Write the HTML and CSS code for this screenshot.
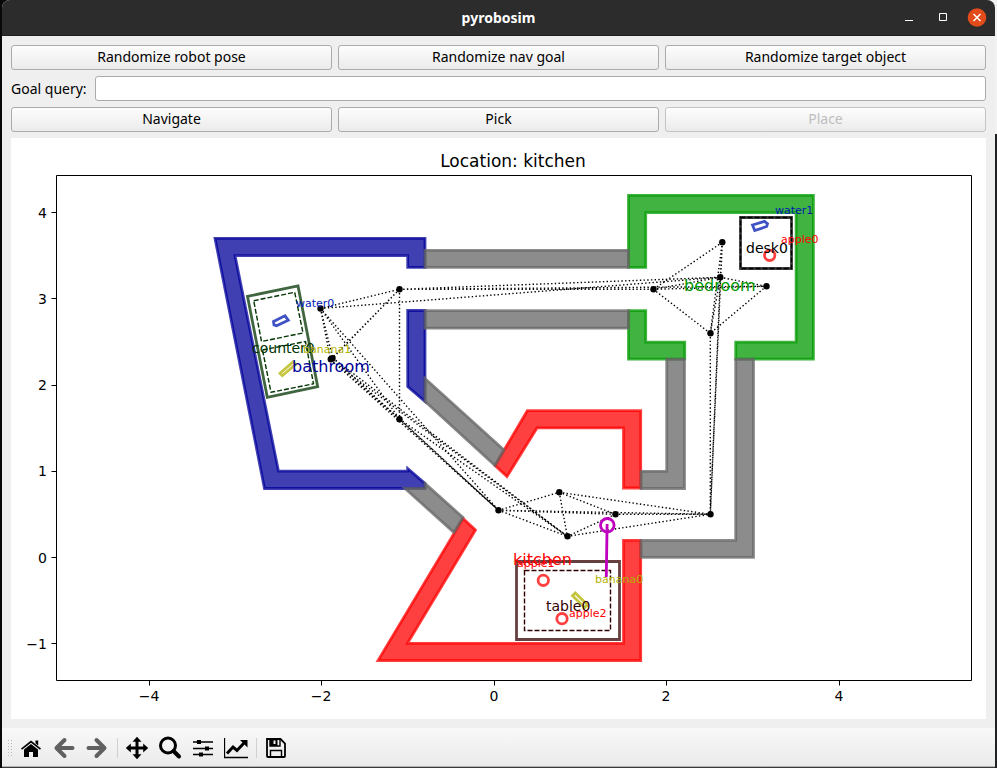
FILE: index.html
```html
<!DOCTYPE html>
<html lang="en">
<head>
<meta charset="utf-8">
<title>pyrobosim</title>
<link rel="stylesheet" href="styles.css">
</head>
<body>
<div class="window">
  <header class="titlebar">
    <h1>pyrobosim</h1>
    <div class="controls">
      <button type="button" aria-label="Minimize"><svg width="20" height="20" viewBox="0 0 20 20"><path d="M6 12.500h8" stroke="#fff" fill="none"/></svg></button>
      <button type="button" aria-label="Maximize"><svg width="20" height="20" viewBox="0 0 20 20"><path d="M6.500 5.500h7v7h-7z" stroke="#fff" fill="none"/></svg></button>
      <button type="button" class="close" aria-label="Close"><svg width="20" height="20" viewBox="0 0 20 20"><circle cx="10" cy="9.500" r="9.300" fill="#e24b1a"/><path d="M6.500 6l7 7M13.500 6l-7 7" stroke="#fff" stroke-width="1.500" fill="none"/></svg></button>
    </div>
  </header>

  <main class="content">
    <div class="row">
      <button type="button" class="btn">Randomize robot pose</button>
      <button type="button" class="btn">Randomize nav goal</button>
      <button type="button" class="btn">Randomize target object</button>
    </div>
    <div class="query">
      <label for="goal">Goal query:</label>
      <input id="goal" type="text">
    </div>
    <div class="row">
      <button type="button" class="btn">Navigate</button>
      <button type="button" class="btn">Pick</button>
      <button type="button" class="btn" disabled>Place</button>
    </div>

    <svg class="plot" viewBox="11 138 975 581" role="img" aria-label="World map">
      <text class="t-title" x="513" y="167" text-anchor="middle">Location: kitchen</text>

      <g class="room bathroom">
        <path d="M215 238.300H425V267.400H407.700V255.600H235L278.500 471.200H407.700V468.500L425 483.500V488.500H264.500Z"/>
        <path d="M407.700 310.500H425V401.500L407.700 386.500Z"/>
      </g>
      <g class="room kitchen">
        <path d="M527.300 410.700H640.700V488H623.500V427.900H537L507 476.500L495 465.500Z"/>
        <path d="M623.500 540.400H640.700V660.500H378L463 518.500L475.500 530L407.500 643.300H623.500Z"/>
      </g>
      <g class="room bedroom">
        <path d="M628.500 195.300H813.400V359.100H735.700V342.200H796.100V212.600H645.700V267.400H628.500Z"/>
        <path d="M628.500 310.700H645.700V342.200H684.700V359.100H628.500Z"/>
      </g>
      <g class="room hall">
        <path d="M425 250.300H628.500V267.400H425Z"/>
        <path d="M425 310.700H628.500V328.200H425Z"/>
        <path d="M425 378.500L504 450L495 465.500L425 401.500Z"/>
        <path d="M405 488.500H425V483.500L463 517.500L454 532.500Z"/>
        <path d="M641 471.300H666.700V359.100H684.500V488.500H641Z"/>
        <path d="M735.700 359.100H753.500V557.300H641V540.400H735.700Z"/>
      </g>

      <g class="edges">
        <path d="M320.500 308.500L399.500 289.300M320.500 308.500L330.500 359.500M320.500 308.500L332.800 358M320.500 308.500L498.500 510.300M320.500 308.500L399.500 419M320.500 308.500L720.300 277.300"/>
        <path d="M399.500 289.300L330.500 359.500M399.500 289.300L332.800 358M399.500 289.300V419M399.500 289.300H653.300M399.500 289.300L720.300 277.300M399.500 289.300L766.300 286.300"/>
        <path d="M330.500 359.500L399.500 419M332.800 358L399.500 419M330.500 359.500L498.500 510.300M332.800 358L498.500 510.300M330.500 359.500L567.300 536.300M332.800 358L567.300 536.300M399.500 419L498.500 510.300M399.500 419L567.300 536.300"/>
        <path d="M722.300 242.300L720.300 277.300M722.300 242.300L653.300 289.300M722.300 242.300L710.300 333.300M722.300 242.300L710.300 514.300M720.300 277.300L653.300 289.300M720.300 277.300L766.300 286.300M720.300 277.300L710.300 333.300M720.300 277.300L710.300 514.300"/>
        <path d="M653.300 289.300L766.300 286.300M653.300 289.300L710.300 333.300M766.300 286.300L710.300 333.300M710.300 333.300V514.300"/>
        <path d="M498.500 510.300L559.300 492.300M498.500 510.300L615.300 514.300M498.500 510.300L567.300 536.300M498.500 510.300L710.300 514.300M559.300 492.300L615.300 514.300M559.300 492.300L567.300 536.300M559.300 492.300L710.300 514.300M615.300 514.300L567.300 536.300M615.300 514.300H710.300M567.300 536.300L710.300 514.300"/>
      </g>
      <g class="nodes">
        <circle cx="320.500" cy="308.500" r="3.200"/><circle cx="399.500" cy="289.300" r="3.200"/>
        <circle cx="330.800" cy="359.300" r="3.200"/><circle cx="332.500" cy="358.300" r="3.200"/>
        <circle cx="399.500" cy="419.300" r="3.200"/><circle cx="722.300" cy="242.300" r="3.200"/>
        <circle cx="720.300" cy="277.300" r="3.200"/><circle cx="653.500" cy="289.300" r="3.200"/>
        <circle cx="766.500" cy="286.300" r="3.200"/><circle cx="710.500" cy="333.300" r="3.200"/>
        <circle cx="498.500" cy="510.300" r="3.200"/><circle cx="559.300" cy="492.300" r="3.200"/>
        <circle cx="615.500" cy="514.300" r="3.200"/><circle cx="567.500" cy="536.300" r="3.200"/>
        <circle cx="710.500" cy="514.300" r="3.200"/>
      </g>

      <g class="furniture counter">
        <path d="M247.500 296.300L298 286L317.700 386.700L267.300 397.300Z"/>
        <path class="surface" d="M253.700 300.700L294.700 292.300L303 333L261.500 341.500Z"/>
        <path class="surface" d="M262.500 350L305.500 341.500L313.500 383.800L271 392.300Z"/>
      </g>
      <g class="furniture table">
        <path d="M516.500 561.500H619.500V639.500H516.500Z"/>
        <path class="surface" d="M524.500 570.500H610.500V630.500H524.500Z"/>
      </g>
      <g class="furniture desk">
        <path d="M740.500 217.500H791.500V268.500H740.500Z"/>
        <path class="surface" d="M740.500 217.500H791.500V268.500H740.500Z"/>
      </g>
      <g class="object water">
        <path d="M273.500 321.500L285 315.800L288.300 320.300L276.500 325.700L274 325Z"/>
        <path d="M752.500 225L764.500 221.300L767.500 223.700L766.700 226.500L754.700 230.500Z"/>
      </g>
      <g class="object banana">
        <path d="M280 373.300L293.300 361.700L295.700 364.300L282.300 375.700Z"/>
        <path d="M575.300 593L587.500 604.700L584.700 607.500L572.500 595.700Z"/>
      </g>
      <g class="object apple">
        <circle cx="769.700" cy="255.300" r="5.200"/>
        <circle cx="543.300" cy="580.300" r="5.200"/>
        <circle cx="562" cy="618.700" r="5.200"/>
      </g>
      <g class="robot">
        <circle cx="607.300" cy="525.300" r="6.800"/>
        <path d="M607.100 524L606.300 577"/>
      </g>

      <g class="t-room">
        <text x="513" y="565" fill="#f00">kitchen</text>
        <text x="684" y="291" fill="#090">bedroom</text>
        <text x="292" y="372" fill="#009">bathroom</text>
      </g>
      <g class="t-medium">
        <text x="252" y="353" fill="#003300">counter0</text>
        <text x="546" y="611" fill="#330000">table0</text>
        <text x="746" y="253">desk0</text>
      </g>
      <g class="t-small">
        <text x="296" y="307" fill="#0019b2">water0</text>
        <text x="775" y="214" fill="#0019b2">water1</text>
        <text x="303" y="353" fill="#b2b200">banana1</text>
        <text x="595" y="583" fill="#b2b200">banana0</text>
        <text x="781" y="243" fill="#f00">apple0</text>
        <text x="517" y="567" fill="#f00">apple1</text>
        <text x="569" y="617" fill="#f00">apple2</text>
      </g>

      <g class="axes">
        <path d="M56.500 175.500H971.500V680.500H56.500Z"/>
        <path d="M149.500 680.500v5M321.500 680.500v5M494.500 680.500v5M666.500 680.500v5M839.500 680.500v5"/>
        <path d="M56.500 212.500h-5M56.500 298.500h-5M56.500 385.500h-5M56.500 471.500h-5M56.500 557.500h-5M56.500 643.500h-5"/>
      </g>
      <g class="t-medium" text-anchor="middle">
        <text x="149" y="701">−4</text><text x="321" y="701">−2</text><text x="494" y="701">0</text><text x="666" y="701">2</text><text x="839" y="701">4</text>
      </g>
      <g class="t-medium" text-anchor="end">
        <text x="47" y="218">4</text><text x="47" y="304">3</text><text x="47" y="390">2</text><text x="47" y="476">1</text><text x="47" y="563">0</text><text x="47" y="649">−1</text>
      </g>
    </svg>
  </main>

  <nav class="toolbar" aria-label="Plot tools">
    <span class="grip"></span>
    <button type="button" aria-label="Home"><svg viewBox="0 0 24 24"><path d="M2 12.500L12 4.500L22 12.500L21 13.800L12 6.700L3 13.800ZM16.500 4.500h2.700v5L16.500 7.300ZM12 8l7 5.500v7.500h-5v-5h-4v5h-5v-7.500Z"/></svg></button>
    <button type="button" class="muted" aria-label="Back"><svg viewBox="0 0 24 24"><path d="M12.500 4L4.500 12l8 8M5 12h15.500" fill="none" stroke-width="4"/></svg></button>
    <button type="button" class="muted" aria-label="Forward"><svg viewBox="0 0 24 24"><path d="M11.500 4l8 8l-8 8M19 12H3.500" fill="none" stroke-width="4"/></svg></button>
    <span class="sep"></span>
    <button type="button" aria-label="Pan"><svg viewBox="0 0 24 24"><path d="M12 .8l4.500 5h-3v4.700h4.700v-3l5 4.500l-5 4.500v-3h-4.700v4.700h3l-4.500 5l-4.500-5h3v-4.700H5.800v3L.8 12l5-4.500v3h4.700V5.800h-3Z"/></svg></button>
    <button type="button" aria-label="Zoom"><svg viewBox="0 0 24 24"><circle cx="10" cy="9.500" r="7.500" fill="none" stroke="#000" stroke-width="3"/><path d="M15.500 15l5.500 5.500" stroke="#000" stroke-width="4" stroke-linecap="round"/></svg></button>
    <button type="button" aria-label="Configure subplots"><svg viewBox="0 0 24 24"><path d="M2 6h20M2 12.500h20M2 18.500h20" stroke="#000" stroke-width="1.400"/><path d="M6 4h4v4H6ZM14 10.500h4v4h-4ZM8 16.500h4v4H8Z"/></svg></button>
    <button type="button" aria-label="Edit axes"><svg viewBox="0 0 24 24"><path d="M.5 2v19.500H24" fill="none" stroke="#000" stroke-width="1.300"/><path d="M3 17.500l6-6.500l4 3.500l7-7.500" fill="none" stroke="#000" stroke-width="3"/><path d="M16 4h7.500v7.500Z"/></svg></button>
    <span class="sep"></span>
    <button type="button" aria-label="Save"><svg viewBox="0 0 24 24"><path d="M3 3h13.500l4.500 4.500v12.500q0 1-1 1H4q-1 0-1-1Z" fill="none" stroke="#000" stroke-width="1.800"/><path d="M6 3v7h10V3M6.500 21v-6.500h11V21" fill="none" stroke="#000" stroke-width="1.400"/><path d="M6 3h7.500v5h-2V4.500H9.500V8h4v2H6Z"/></svg></button>
  </nav>
</div>
</body>
</html>
```
FILE: styles.css
```css
* {
  box-sizing: border-box;
}

body {
  margin: 0;
  min-height: 100vh;
  background: linear-gradient(90deg, #080808 50%, transparent 50%),
    linear-gradient(#f2f2f2 134px, #202225 134px);
  color: #000;
  font: 14px/20px "Noto Sans", "Open Sans", sans-serif;
}

button,
input {
  font: inherit;
  color: inherit;
}

.window {
  margin: 0 2px;
  background: #efefef;
  border-radius: 8px 8px 0 0;
  border-bottom: 1px solid #3a3a3a;
}

.titlebar {
  display: grid;
  grid-template-columns: 1fr auto 1fr;
  align-items: center;
  height: 36px;
  padding: 0 8px;
  background: #2c2c2c;
  border-bottom: 1px solid #1e1e1e;
  border-radius: 8px 8px 0 0;
  color: #fff;
}

.titlebar h1 {
  grid-column: 2;
  margin: 0;
  font-size: 14px;
  font-weight: 700;
}

.controls {
  display: flex;
  justify-content: flex-end;
  gap: 14px;
}

.controls button {
  display: block;
  width: 20px;
  height: 20px;
  padding: 0;
  border: 0;
  background: none;
}

.controls svg {
  display: block;
}

.content {
  display: flex;
  flex-direction: column;
  gap: 6px;
  padding: 9px;
}

.row {
  display: grid;
  grid-template-columns: repeat(3, 1fr);
  gap: 6px;
}

.btn {
  height: 25px;
  padding: 0 8px 1px;
  border: 1px solid #ababab;
  border-radius: 3px;
  background: linear-gradient(#fdfdfd, #ebebeb);
  line-height: 20px;
}

.btn:disabled {
  border-color: #c4c4c4;
  color: #bebebe;
}

.query {
  display: flex;
  align-items: center;
  gap: 8px;
}

.query input {
  flex: 1;
  min-width: 0;
  height: 25px;
  padding: 0 6px;
  border: 1px solid #ababab;
  border-radius: 3px;
  background: #fff;
}

.plot {
  display: block;
  width: 100%;
  background: #fff;
  font-family: "DejaVu Sans", sans-serif;
}

.t-title {
  font-size: 17px;
}

.t-room {
  font-size: 16px;
}

.t-medium {
  font-size: 14px;
}

.t-small {
  font-size: 11px;
}

.room {
  fill-opacity: .75;
  stroke-opacity: .75;
  stroke-width: 2.800;
}

.bathroom {
  fill: #009;
  stroke: #009;
}

.kitchen {
  fill: #f00;
  stroke: #f00;
}

.bedroom {
  fill: #090;
  stroke: #090;
}

.hall {
  fill: #666;
  stroke: #666;
}

.edges {
  fill: none;
  stroke: #000;
  stroke-width: 1.400;
  stroke-dasharray: 1.400 2.300;
}

.furniture {
  fill: none;
  stroke-width: 2.800;
}

.furniture path {
  stroke-opacity: .75;
}

.furniture .surface {
  stroke-width: 1.400;
  stroke-opacity: 1;
  stroke-dasharray: 5 2;
}

.counter {
  stroke: #003300;
}

.table {
  stroke: #330000;
}

.desk {
  stroke: #000;
}

.object {
  fill: none;
  stroke-opacity: .75;
  stroke-width: 2.800;
}

.water {
  stroke: #0019b2;
}

.banana {
  stroke: #b2b200;
}

.apple {
  stroke: #f00;
}

.robot {
  fill: none;
  stroke: #bf00bf;
  stroke-width: 2.800;
}

.axes {
  fill: none;
  stroke: #000;
}

.toolbar {
  display: flex;
  align-items: center;
  height: 39px;
  padding: 2px 0 0 5px;
  border-bottom: 1px solid #b5b5b5;
  background: linear-gradient(#f8f8f8, #ebebeb);
}

.toolbar button {
  width: 25px;
  height: 25px;
  margin: 0 4px;
  padding: 0;
  border: 0;
  background: none;
}

.toolbar svg {
  display: block;
  width: 24px;
  height: 24px;
  fill: #000;
}

.toolbar .muted svg {
  stroke: #606060;
  stroke-linecap: round;
  stroke-linejoin: round;
}

.grip {
  width: 6px;
  height: 18px;
  margin-right: 2px;
  background: radial-gradient(circle, #bbb 1px, transparent 1px) 0 0 / 3px 3px;
}

.sep {
  width: 1px;
  height: 20px;
  margin: 0 3px;
  background: #d0d0d0;
}
```
